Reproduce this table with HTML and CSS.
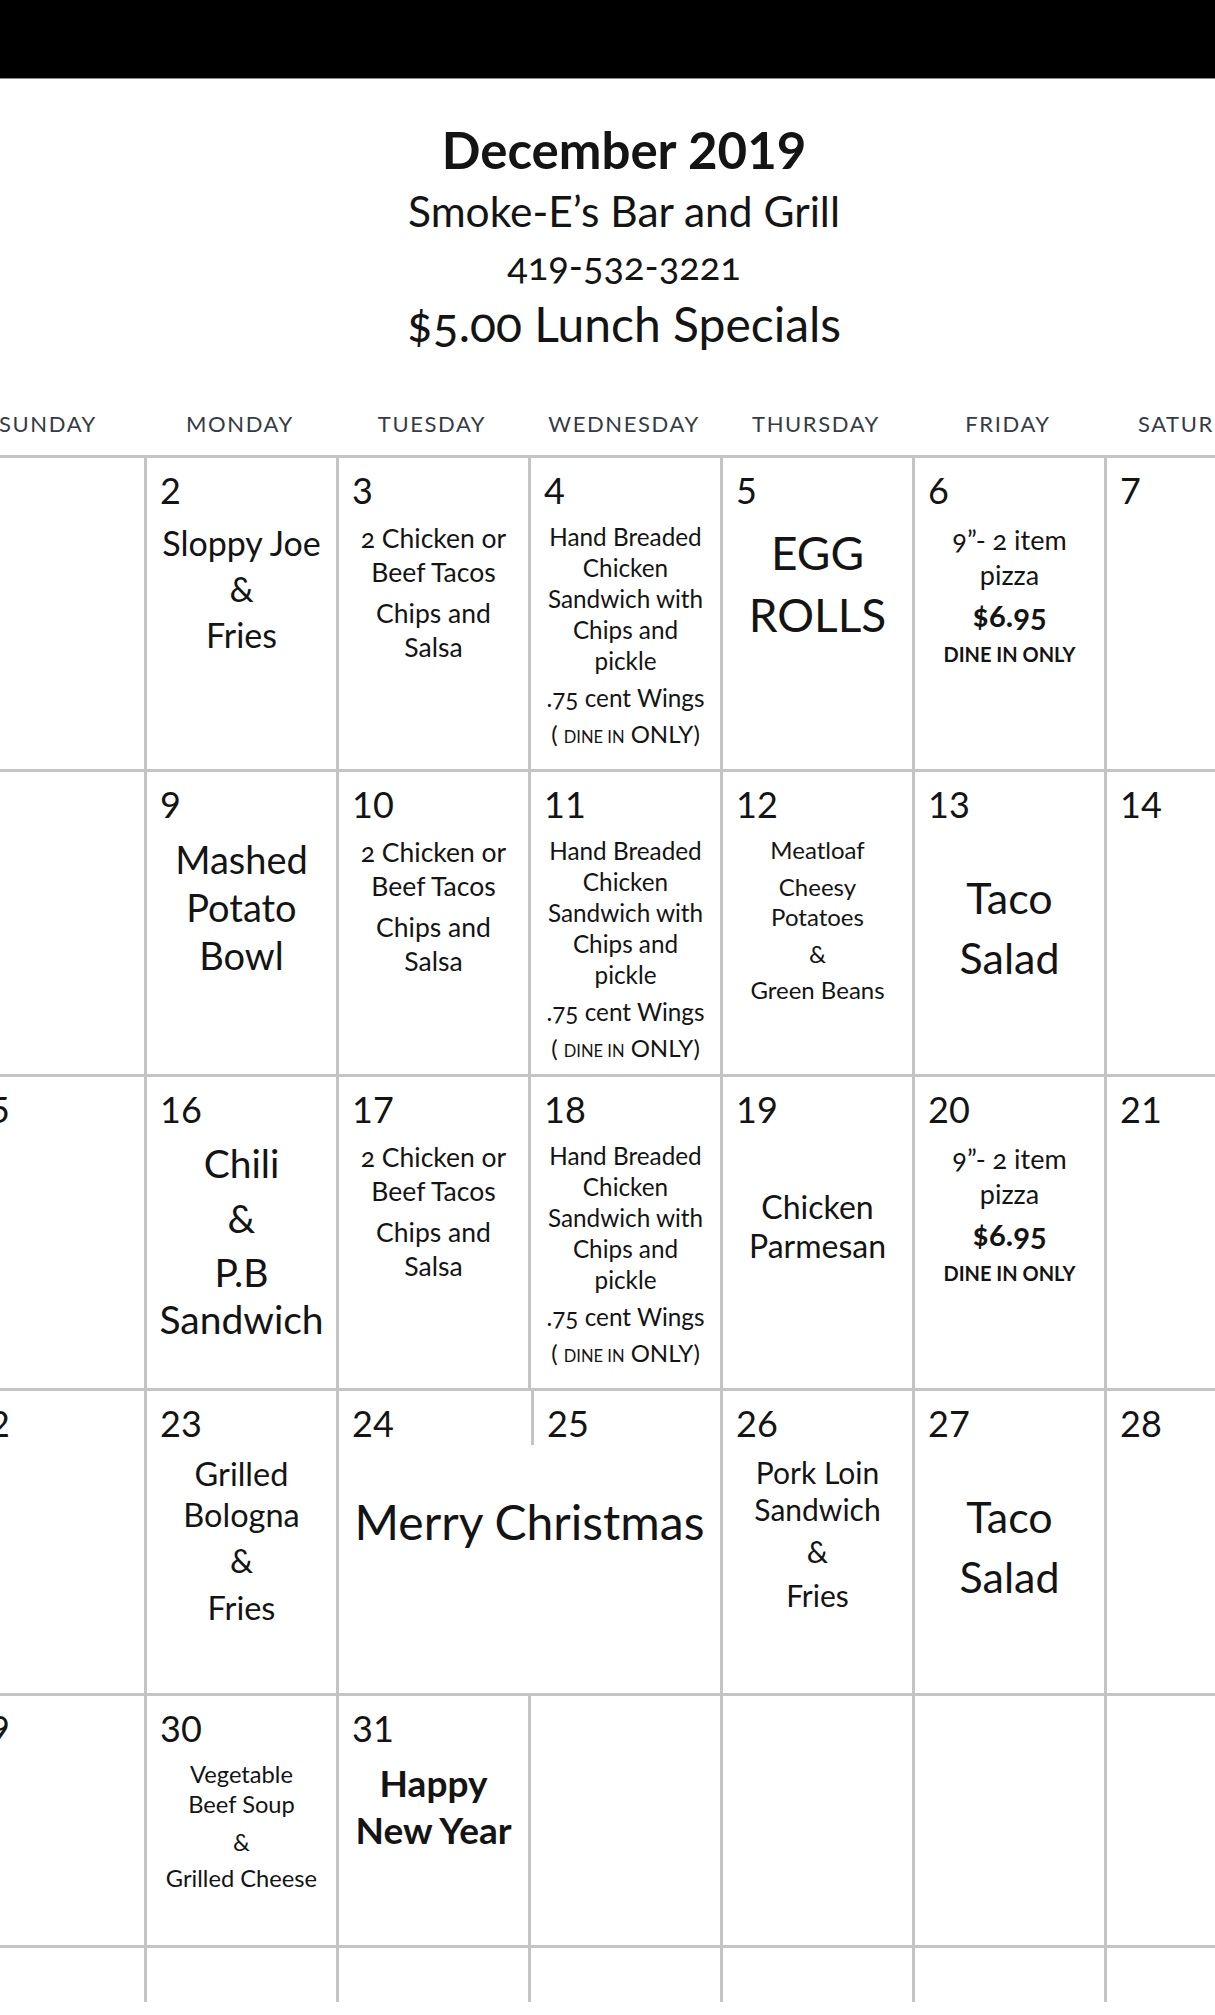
FILE: index.html
```html
<!DOCTYPE html>
<html lang="en">
<head>
<meta charset="utf-8">
<title>December 2019 - Smoke-E's Bar and Grill</title>
<link rel="stylesheet" href="styles.css">
</head>
<body>
<div class="topbar"></div>
<main class="sheet">
  <header class="head">
    <h1 class="title">December 2019</h1>
    <p class="venue">Smoke-E’s Bar and Grill</p>
    <p class="phone">419-532-3221</p>
    <p class="specials">$5.00 Lunch Specials</p>
  </header>

  <div class="weekdays">
    <div>SUNDAY</div><div>MONDAY</div><div>TUESDAY</div><div>WEDNESDAY</div><div>THURSDAY</div><div>FRIDAY</div><div>SATURDAY</div>
  </div>

  <div class="grid">
    <!-- week 1 -->
    <div class="cell"><div class="num">1</div></div>
    <div class="cell"><div class="num">2</div>
      <div class="menu m-sloppy"><p>Sloppy Joe</p><p>&amp;</p><p>Fries</p></div></div>
    <div class="cell"><div class="num">3</div>
      <div class="menu m-taco"><p>2 Chicken or</p><p>Beef Tacos</p><p class="gap">Chips and</p><p>Salsa</p></div></div>
    <div class="cell"><div class="num">4</div>
      <div class="menu m-chick"><p>Hand Breaded</p><p>Chicken</p><p>Sandwich with</p><p>Chips and</p><p>pickle</p><p class="wings">.75 cent Wings</p><p class="dine">( <span class="sc">DINE IN</span> ONLY)</p></div></div>
    <div class="cell"><div class="num">5</div>
      <div class="menu m-egg"><p>EGG</p><p>ROLLS</p></div></div>
    <div class="cell"><div class="num">6</div>
      <div class="menu m-pizza"><p>9”- 2 item</p><p>pizza</p><p class="price">$6.95</p><p class="only">DINE IN ONLY</p></div></div>
    <div class="cell"><div class="num">7</div></div>

    <!-- week 2 -->
    <div class="cell"><div class="num">8</div></div>
    <div class="cell"><div class="num">9</div>
      <div class="menu m-mashed"><p>Mashed</p><p>Potato</p><p>Bowl</p></div></div>
    <div class="cell"><div class="num">10</div>
      <div class="menu m-taco"><p>2 Chicken or</p><p>Beef Tacos</p><p class="gap">Chips and</p><p>Salsa</p></div></div>
    <div class="cell"><div class="num">11</div>
      <div class="menu m-chick"><p>Hand Breaded</p><p>Chicken</p><p>Sandwich with</p><p>Chips and</p><p>pickle</p><p class="wings">.75 cent Wings</p><p class="dine">( <span class="sc">DINE IN</span> ONLY)</p></div></div>
    <div class="cell"><div class="num">12</div>
      <div class="menu m-meat"><p>Meatloaf</p><p class="sp">Cheesy</p><p>Potatoes</p><p class="sp">&amp;</p><p class="sp2">Green Beans</p></div></div>
    <div class="cell"><div class="num">13</div>
      <div class="menu m-salad"><p>Taco</p><p>Salad</p></div></div>
    <div class="cell"><div class="num">14</div></div>

    <!-- week 3 -->
    <div class="cell"><div class="num">15</div></div>
    <div class="cell"><div class="num">16</div>
      <div class="menu m-chili"><p>Chili</p><p class="amp">&amp;</p><p class="pb">P.B</p><p>Sandwich</p></div></div>
    <div class="cell"><div class="num">17</div>
      <div class="menu m-taco"><p>2 Chicken or</p><p>Beef Tacos</p><p class="gap">Chips and</p><p>Salsa</p></div></div>
    <div class="cell"><div class="num">18</div>
      <div class="menu m-chick"><p>Hand Breaded</p><p>Chicken</p><p>Sandwich with</p><p>Chips and</p><p>pickle</p><p class="wings">.75 cent Wings</p><p class="dine">( <span class="sc">DINE IN</span> ONLY)</p></div></div>
    <div class="cell"><div class="num">19</div>
      <div class="menu m-parm"><p>Chicken</p><p>Parmesan</p></div></div>
    <div class="cell"><div class="num">20</div>
      <div class="menu m-pizza"><p>9”- 2 item</p><p>pizza</p><p class="price">$6.95</p><p class="only">DINE IN ONLY</p></div></div>
    <div class="cell"><div class="num">21</div></div>

    <!-- week 4 -->
    <div class="cell"><div class="num">22</div></div>
    <div class="cell"><div class="num">23</div>
      <div class="menu m-bologna"><p>Grilled</p><p>Bologna</p><p class="amp">&amp;</p><p class="last">Fries</p></div></div>
    <div class="cell span2">
      <div class="split"><div class="num">24</div><div class="num half">25</div></div>
      <div class="menu m-xmas"><p>Merry Christmas</p></div></div>
    <div class="cell"><div class="num">26</div>
      <div class="menu m-pork"><p>Pork Loin</p><p>Sandwich</p><p class="amp">&amp;</p><p class="last">Fries</p></div></div>
    <div class="cell"><div class="num">27</div>
      <div class="menu m-salad"><p>Taco</p><p>Salad</p></div></div>
    <div class="cell"><div class="num">28</div></div>

    <!-- week 5 -->
    <div class="cell"><div class="num">29</div></div>
    <div class="cell"><div class="num">30</div>
      <div class="menu m-soup"><p>Vegetable</p><p>Beef Soup</p><p class="amp">&amp;</p><p class="last">Grilled Cheese</p></div></div>
    <div class="cell"><div class="num">31</div>
      <div class="menu m-newyear"><p>Happy</p><p>New Year</p></div></div>
    <div class="cell"></div>
    <div class="cell"></div>
    <div class="cell"></div>
    <div class="cell"></div>

    <!-- week 6 (cut off) -->
    <div class="cell"></div><div class="cell"></div><div class="cell"></div><div class="cell"></div><div class="cell"></div><div class="cell"></div><div class="cell"></div>
  </div>
</main>
</body>
</html>
```

FILE: styles.css
```css
html, body {
  margin: 0;
  padding: 0;
  background: #ffffff;
  overflow-x: hidden;
}
body {
  font-family: Lato, "Open Sans", "Noto Sans", sans-serif;
  color: #141414;
  height: 2015px;
  overflow: hidden;
}
p, h1 { margin: 0; font-weight: 400; }

.topbar {
  height: 78px;
  background: #000;
  border-bottom: 1px solid #8c8c8c;
}

.sheet {
  width: 1344px;
  margin-left: -48px;
}

.head {
  text-align: center;
  padding-top: 46px;
}
.title {
  font-size: 51px;
  font-weight: 700;
  line-height: 50px;
}
.venue {
  font-size: 42.5px;
  line-height: 60px;
  margin-top: 6px;
}
.phone {
  font-size: 38px;
  line-height: 56px;
  margin-top: -4px;
  font-variant-numeric: oldstyle-nums;
}
.specials {
  font-size: 48px;
  line-height: 56px;
  margin-top: 3px;
  font-variant-numeric: oldstyle-nums;
}

.weekdays {
  display: grid;
  grid-template-columns: repeat(7, 192px);
  margin-top: 52px;
  height: 51px;
  line-height: 40px;
  font-size: 22px;
  letter-spacing: 1.6px;
  color: #343b46;
  text-align: center;
}

.grid {
  display: grid;
  grid-template-columns: repeat(7, 192px);
  grid-template-rows: 314px 305px 314px 305px 252px 57px;
}
.cell {
  border-top: 3px solid #c4c4c4;
  border-left: 3px solid #c4c4c4;
  padding: 10px 0 0 13px;
  overflow: hidden;
}
.span2 { grid-column: span 2; padding-left: 0; }
.num {
  font-size: 36px;
  line-height: 44px;
  height: 44px;
}
.split {
  display: flex;
}
.split .num {
  width: 179px;
  padding-left: 13px;
}
.split .half {
  border-left: 3px solid #c4c4c4;
  height: 44px;
  margin-top: -10px;
  padding-top: 10px;
  width: auto;
  flex: 1;
}

.menu {
  text-align: center;
  margin-left: -13px;
  font-variant-numeric: oldstyle-nums;
}
.span2 .menu { margin-left: 0; }

/* Monday 2 */
.m-sloppy { font-size: 34px; line-height: 46px; margin-top: 8px; }
/* Tacos */
.m-taco { font-size: 26.5px; line-height: 34px; margin-top: 9px; }
.m-taco .gap { margin-top: 7px; }
/* Chicken sandwich */
.m-chick { font-size: 24.3px; line-height: 31px; margin-top: 9px; }
.m-chick .wings { margin-top: 6px; }
.m-chick .dine { margin-top: 5px; font-size: 24px; }
.m-chick .sc { font-size: 16.5px; }
/* Egg rolls */
.m-egg { font-size: 46px; line-height: 62px; margin-top: 10px; }
/* Pizza */
.m-pizza { font-size: 27px; line-height: 35px; margin-top: 9.5px; }
.m-pizza .price { font-weight: 700; font-size: 31px; line-height: 47px; }
.m-pizza .only { font-weight: 700; font-size: 20px; line-height: 30px; }
/* Mashed */
.m-mashed { font-size: 38px; line-height: 48px; margin-top: 9px; }
/* Meatloaf */
.m-meat { font-size: 24px; line-height: 30px; margin-top: 9px; }
.m-meat .sp { margin-top: 7px; }
.m-meat .sp2 { margin-top: 6px; }
/* Taco salad */
.m-salad { font-size: 43px; line-height: 60px; margin-top: 42px; }
/* Chili */
.m-chili { font-size: 39px; line-height: 47px; margin-top: 8.5px; }
.m-chili .amp { margin-top: 8px; }
.m-chili .pb { margin-top: 7px; }
/* Parmesan */
.m-parm { font-size: 32px; line-height: 39px; margin-top: 55.5px; }
/* Bologna */
.m-bologna { font-size: 32.5px; line-height: 41px; margin-top: 8px; }
.m-bologna .amp { margin-top: 5px; }
.m-bologna .last { margin-top: 6px; }
/* Christmas */
.m-xmas { font-size: 48px; line-height: 60px; margin-top: 46.5px; }
/* Pork loin */
.m-pork { font-size: 30px; line-height: 37px; margin-top: 9px; }
.m-pork .amp { margin-top: 5px; }
.m-pork .last { margin-top: 7px; }
/* Soup */
.m-soup { font-size: 23.7px; line-height: 30px; margin-top: 8.5px; }
.m-soup .amp { margin-top: 8px; }
.m-soup .last { margin-top: 6px; }
/* New year */
.m-newyear { font-size: 37px; line-height: 47px; margin-top: 9px; }
.m-newyear p { font-weight: 700; }
```
